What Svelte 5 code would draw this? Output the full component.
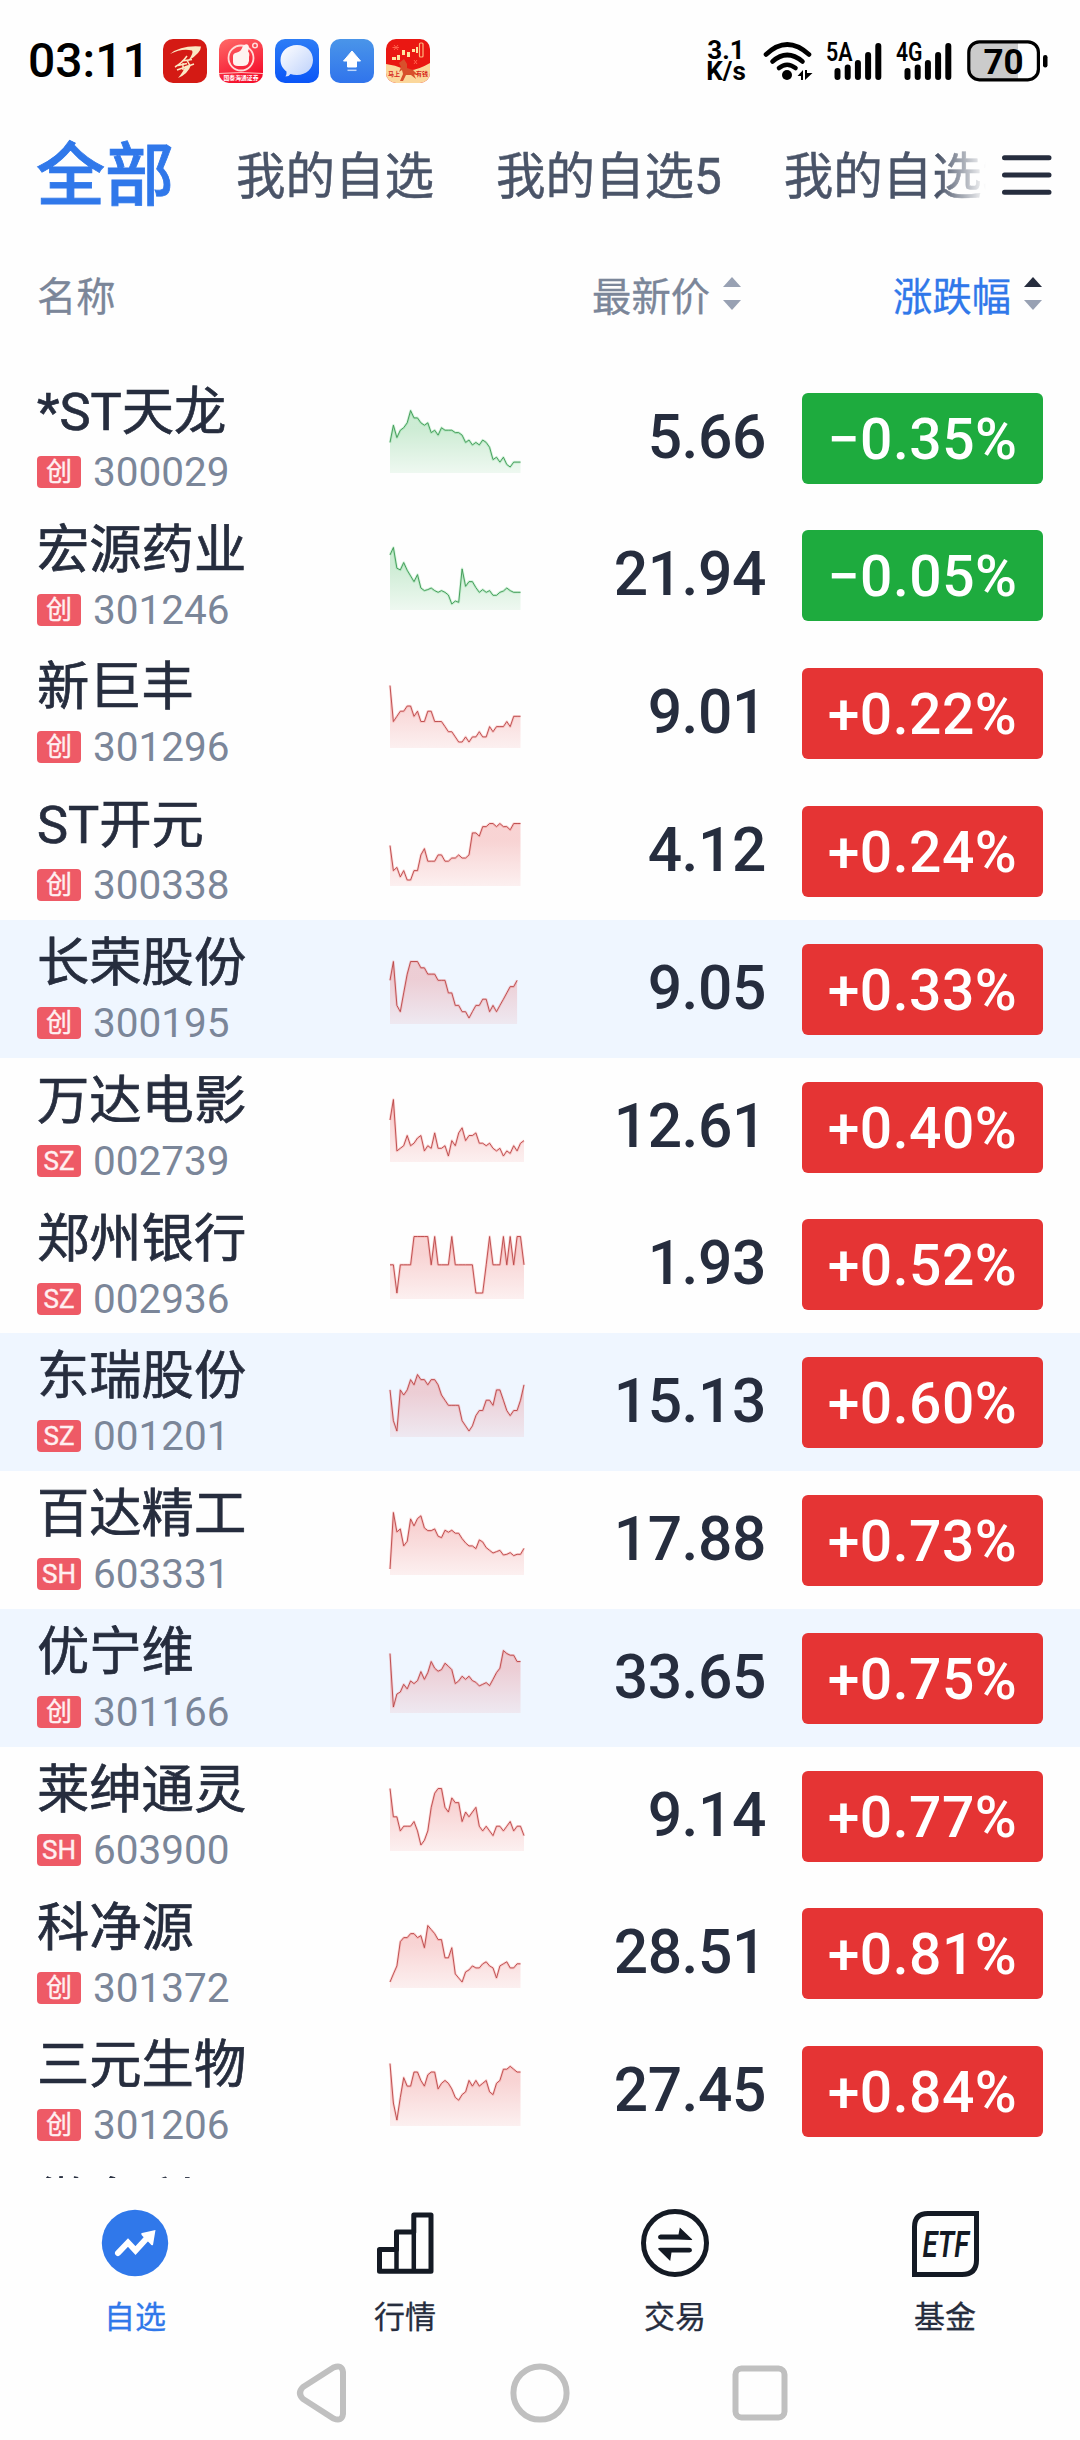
<script lang="ts">
	interface Stock {
		name: string;
		market: string;
		code: string;
		price: string;
		change: number;
		/** Row background is tinted */
		marked?: boolean;
		/** Intraday trend, relative levels */
		trend: number[];
	}

	const POINT_STEP = 3.435;
	const CHART_HEIGHT = 64;
	const CHART_TOP = 1.5;
	const CHART_BOTTOM = 6;

	const tabs = ['全部', '我的自选', '我的自选5', '我的自选3'];
	let activeTab = $state(0);
	let activeNav = $state('watch');

	const navItems = [
		{ id: 'watch', label: '自选' },
		{ id: 'market', label: '行情' },
		{ id: 'trade', label: '交易' },
		{ id: 'fund', label: '基金' }
	];

	const signals = ['5A', '4G'];

	const stocks: Stock[] = [
		{
			name: '*ST天龙', market: '创', code: '300029', price: '5.66', change: -0.35,
			trend: [10, 17, 12, 15, 16, 18, 23, 20, 20, 18, 17, 18, 14, 15, 13, 16, 15, 15, 15, 14, 14, 13, 10, 11, 9, 10, 9, 11, 10, 8, 3, 4, 2, 4, 1, 0, 2, 2, 2]
		},
		{
			name: '宏源药业', market: '创', code: '301246', price: '21.94', change: -0.05,
			trend: [147, 169, 107, 102, 124, 101, 84, 67, 88, 48, 40, 43, 48, 40, 35, 40, 35, 27, 0, 9, 5, 105, 53, 67, 67, 49, 35, 43, 35, 40, 26, 26, 35, 39, 48, 40, 35, 35, 35]
		},
		{
			name: '新巨丰', market: '创', code: '301296', price: '9.01', change: 0.22,
			trend: [11, 4, 5, 6, 6, 7, 7, 5, 6, 4, 4, 6, 6, 4, 4, 4, 3, 2, 2, 1, 0, 0, 1, 0, 1, 1, 2, 1, 1, 3, 2, 3, 3, 3, 4, 3, 5, 5, 5]
		},
		{
			name: 'ST开元', market: '创', code: '300338', price: '4.12', change: 0.24,
			trend: [11, 3, 4, 1, 3, 0, 0, 3, 3, 8, 10, 6, 6, 6, 8, 8, 6, 6, 7, 7, 8, 7, 7, 8, 15, 15, 14, 17, 17, 18, 18, 17, 18, 17, 17, 16, 18, 18, 18]
		},
		{
			name: '长荣股份', market: '创', code: '300195', price: '9.05', change: 0.33, marked: true,
			trend: [6, 9, 2, 1, 4, 7, 9, 9, 9, 8, 8, 7, 7, 7, 6, 6, 6, 4, 4, 2, 2, 1, 1, 0, 1, 2, 2, 3, 3, 1, 2, 1, 2, 3, 4, 5, 5, 6]
		},
		{
			name: '万达电影', market: 'SZ', code: '002739', price: '12.61', change: 0.4,
			trend: [14, 22, 2, 3, 4, 8, 4, 5, 7, 8, 2, 4, 3, 9, 3, 3, 4, 0, 6, 4, 9, 11, 6, 8, 8, 9, 5, 5, 4, 5, 3, 2, 3, 0, 2, 1, 4, 2, 5, 6]
		},
		{
			name: '郑州银行', market: 'SZ', code: '002936', price: '1.93', change: 0.52,
			trend: [1, 1, 0, 1, 1, 1, 1, 2, 2, 2, 2, 2, 1, 2, 1, 1, 1, 1, 2, 1, 1, 1, 1, 1, 1, 0, 0, 0, 1, 2, 1, 1, 1, 2, 1, 2, 1, 2, 2, 1]
		},
		{
			name: '东瑞股份', market: 'SZ', code: '001201', price: '15.13', change: 0.6, marked: true,
			trend: [8, 2, 0, 8, 7, 8, 10, 9, 11, 10, 10, 9, 10, 10, 9, 7, 6, 5, 5, 5, 5, 2, 1, 0, 1, 3, 4, 4, 6, 6, 5, 8, 8, 6, 4, 3, 4, 4, 6, 9]
		},
		{
			name: '百达精工', market: 'SH', code: '603331', price: '17.88', change: 0.73,
			trend: [0, 169, 111, 120, 69, 83, 150, 129, 151, 159, 123, 115, 115, 120, 98, 94, 116, 110, 116, 107, 107, 91, 78, 69, 69, 61, 87, 81, 64, 56, 48, 52, 56, 42, 44, 49, 40, 44, 44, 62]
		},
		{
			name: '优宁维', market: '创', code: '301166', price: '33.65', change: 0.75, marked: true,
			trend: [160, 0, 39, 45, 68, 54, 78, 70, 79, 106, 83, 103, 136, 116, 107, 112, 131, 122, 112, 70, 78, 92, 83, 92, 79, 74, 63, 68, 73, 64, 83, 103, 116, 169, 160, 155, 155, 136, 136]
		},
		{
			name: '莱绅通灵', market: 'SH', code: '603900', price: '9.14', change: 0.77,
			trend: [12, 6, 6, 3, 4, 4, 4, 5, 3, 0, 1, 3, 8, 11, 12, 12, 8, 7, 10, 9, 9, 5, 7, 6, 7, 8, 4, 3, 4, 3, 2, 4, 4, 3, 4, 5, 3, 4, 4, 2]
		},
		{
			name: '科净源', market: '创', code: '301372', price: '28.51', change: 0.81,
			trend: [0, 4, 8, 20, 22, 22, 24, 24, 22, 23, 17, 28, 26, 24, 21, 21, 12, 12, 17, 4, 2, 0, 5, 6, 8, 7, 7, 9, 10, 8, 7, 2, 8, 9, 10, 7, 7, 9, 9]
		},
		{
			name: '三元生物', market: '创', code: '301206', price: '27.45', change: 0.84,
			trend: [20, 6, 0, 8, 15, 12, 12, 17, 17, 14, 12, 16, 17, 17, 11, 13, 14, 13, 11, 8, 7, 9, 10, 14, 12, 14, 12, 13, 14, 10, 9, 13, 14, 18, 18, 19, 18, 17, 17]
		}
	];

	function linePoints(trend: number[]): string {
		const min = Math.min(...trend);
		const max = Math.max(...trend);
		const range = CHART_HEIGHT - CHART_TOP - CHART_BOTTOM;
		return trend
			.map((v, i) => {
				const y = CHART_TOP + ((max - v) / (max - min)) * range;
				return `${(i * POINT_STEP).toFixed(1)},${y.toFixed(1)}`;
			})
			.join(' ');
	}

	function areaPoints(trend: number[]): string {
		const right = ((trend.length - 1) * POINT_STEP).toFixed(1);
		return `0,${CHART_HEIGHT} ${linePoints(trend)} ${right},${CHART_HEIGHT}`;
	}
</script>

<div class="screen">
	<header class="status-bar">
		<span class="clock">03:11</span>
		<div class="app-icons">
			<svg width="44" height="44" viewBox="0 0 44 44">
				<rect width="44" height="44" rx="10" fill="#d41a14" />
				<path d="M7 15Q18 6 38 7.500Q38 14 25 22Q31 14 29 11.500Q19 9 7 15Z" fill="#fbe9c4" />
				<path d="M24 17Q19 24 12 28M19 22L29 20.500M15 26.500L24 24.500M20 24V31M24 21L27 27M14 31L31 25" fill="none" stroke="#fbe9c4" stroke-width="1.500" />
				<path d="M28 26Q25 35 15 39Q21 32 22 27Z" fill="#fbe9c4" />
			</svg>
			<svg width="44" height="44" viewBox="0 0 44 44">
				<defs>
					<linearGradient id="thumb-bg" x1="0" y1="0" x2="0.4" y2="1">
						<stop offset="0" stop-color="#ff6b68" />
						<stop offset="1" stop-color="#f5102d" />
					</linearGradient>
				</defs>
				<rect width="44" height="44" rx="10" fill="url(#thumb-bg)" />
				<circle cx="22" cy="19" r="12.500" fill="none" stroke="#ffdcd8" stroke-width="1.800" />
				<path d="M14 17Q14 14 18 13.500Q22 12.500 23.500 8Q25 4.500 28.500 5.500Q31 7 29 12.500Q31 14 30 18Q31 27 24 27H19Q14 27 14 23Z" fill="#fff3ef" />
				<circle cx="36" cy="6.500" r="2.300" fill="none" stroke="#ffdcd8" stroke-width="1.500" />
				<path d="M0 34.500Q22 32.500 44 34.500" stroke="#ffc4c0" fill="none" />
				<text x="4.500" y="40.800" font-size="5.800" font-weight="700" textLength="35" lengthAdjust="spacingAndGlyphs" fill="#fff">国泰海通证券</text>
			</svg>
			<svg width="44" height="44" viewBox="0 0 44 44">
				<defs>
					<linearGradient id="msg-bg" x1="0" y1="0" x2="0" y2="1">
						<stop offset="0" stop-color="#2d7df6" />
						<stop offset="1" stop-color="#0a55f7" />
					</linearGradient>
					<linearGradient id="msg-bubble" x1="0" y1="0" x2="1" y2="1">
						<stop offset="0" stop-color="#fff" />
						<stop offset="1" stop-color="#bcd0fb" />
					</linearGradient>
				</defs>
				<rect width="44" height="44" rx="10" fill="url(#msg-bg)" />
				<path d="M22 6C31.500 6 38 12.500 38 21S31.500 36 22 36Q18 36 15.500 35Q14 37.500 10.500 37.500Q12 35.500 11.500 32.500C8 30 5.500 26 5.500 21C5.500 12.500 12.500 6 22 6Z" fill="url(#msg-bubble)" />
			</svg>
			<svg width="44" height="44" viewBox="0 0 44 44">
				<defs>
					<linearGradient id="up-bg" x1="0" y1="0" x2="0" y2="1">
						<stop offset="0" stop-color="#4a95e9" />
						<stop offset="1" stop-color="#3074ec" />
					</linearGradient>
				</defs>
				<rect width="44" height="44" rx="10" fill="url(#up-bg)" />
				<path d="M22 12L30.500 22H26.500V28H17.500V22H13.500Z" fill="#fff" stroke="#fff" stroke-linejoin="round" />
				<path d="M17.500 31.300H26.500" stroke="#bcd5fb" stroke-width="1.500" />
			</svg>
			<svg width="44" height="44" viewBox="0 0 44 44">
				<defs>
					<clipPath id="horse-clip"><rect width="44" height="44" rx="10" /></clipPath>
				</defs>
				<g clip-path="url(#horse-clip)">
					<rect width="44" height="44" fill="#ea1712" />
					<path d="M0 25Q9 26 18 30T44 24V44H0Z" fill="#fbd79b" />
					<path d="M8 6L12 11M12 6L8 11M6.500 8.500H13M28 21L31 25M31 21L28 25" stroke="#ff604b" />
					<path d="M6 18H10V21H6ZM11 16H14V21H11ZM16 11H19V16H16ZM21 13H24V18H21ZM26 10H29V13H26ZM30 8H32V14H30Z" fill="#ffe3a0" />
					<rect x="33.500" y="4" width="3.500" height="14" rx="1" fill="none" stroke="#ffb77e" stroke-width="1.200" />
					<path d="M13 24L18 20L21 25L21 29L27 31L32 36L28 35.500L30 40L25 36L20 36L17 42H14L17 35L16 31L13 33L15 28Z" fill="#d8502c" />
					<text x="2" y="37" font-size="6" font-weight="700" fill="#d6281d">马上</text>
					<text x="30" y="37" font-size="6" font-weight="700" fill="#d6281d">有钱</text>
				</g>
			</svg>
		</div>
		<div class="status-right">
			<div class="net-speed"><span>3.1</span><span>K/s</span></div>
			<svg class="wifi" width="50" height="40" viewBox="0 0 50 40">
				<g fill="none" stroke="#000" stroke-width="4.600" stroke-linecap="round">
					<path d="M3 13.500Q24 -6.500 46 13.500" />
					<path d="M9.500 20.500Q24 7.500 39.500 20.500" />
					<path d="M16 27Q24 20.500 32.500 27" />
				</g>
				<circle cx="24" cy="34" r="5" />
				<path d="M40 29V39H38V35H34.500ZM42 29V39L49.500 32H44V29Z" />
			</svg>
			{#each signals as label}
				<svg class="signal" width="56" height="40" viewBox="0 0 56 40">
					<text x="0" y="20" font-size="25" font-weight="600" textLength="26.500" lengthAdjust="spacingAndGlyphs">{label}</text>
					<path d="M11.500 30V36M21.700 26.500V36M31.900 22V36M42.100 14V36M52.300 5V36" stroke="#000" stroke-width="6" stroke-linecap="round" />
				</svg>
			{/each}
			<svg class="battery" width="82" height="42" viewBox="0 0 82 42">
				<path d="M12 2H51V40H12Q2 40 2 30V12Q2 2 12 2Z" fill="#cbcbcb" />
				<rect x="1.800" y="1.800" width="69.600" height="38" rx="10.500" fill="none" stroke="#000" stroke-width="3.200" />
				<rect x="76" y="15" width="4.500" height="12.500" rx="2.200" />
				<text x="36.500" y="33.500" text-anchor="middle" font-size="35" font-weight="700">70</text>
			</svg>
		</div>
	</header>

	<div class="tab-bar">
		<div class="tabs">
			{#each tabs as tab, i}
				<button class="tab" class:active={activeTab === i} onclick={() => (activeTab = i)}>{tab}</button>
			{/each}
		</div>
		<button class="menu" aria-label="菜单">
			<svg width="50" height="42" viewBox="0 0 50 42">
				<path d="M2.500 3.700H47M2.500 21H47M2.500 38.300H47" stroke="#262d3e" stroke-width="5" stroke-linecap="round" />
			</svg>
		</button>
	</div>

	<div class="columns">
		<span class="col-name">名称</span>
		<span class="col-price">
			最新价
			<svg width="18" height="33" viewBox="0 0 18 33" fill="#98a1b3">
				<path d="M0 10L9 0L18 10Z" />
				<path d="M0 23L9 33L18 23Z" />
			</svg>
		</span>
		<span class="col-change">
			涨跌幅
			<svg width="18" height="33" viewBox="0 0 18 33" fill="#98a1b3">
				<path d="M0 10L9 0L18 10Z" fill="#262d3e" />
				<path d="M0 23L9 33L18 23Z" />
			</svg>
		</span>
	</div>

	<main class="list">
		<svg class="defs" width="0" height="0">
			<defs>
				<linearGradient id="area-up" x1="0" y1="0" x2="0" y2="64" gradientUnits="userSpaceOnUse">
					<stop offset="0.3" stop-color="#e23434" stop-opacity="0.21" />
					<stop offset="1" stop-color="#e23434" stop-opacity="0.07" />
				</linearGradient>
				<linearGradient id="area-down" x1="0" y1="0" x2="0" y2="64" gradientUnits="userSpaceOnUse">
					<stop offset="0.3" stop-color="#1eab3e" stop-opacity="0.22" />
					<stop offset="1" stop-color="#1eab3e" stop-opacity="0.07" />
				</linearGradient>
			</defs>
		</svg>
		{#each stocks as stock (stock.code)}
			{@const down = stock.change < 0}
			<div class="row" class:marked={stock.marked} class:down>
				<div class="identity">
					<div class="name">{stock.name}</div>
					<div class="meta">
						<span class="badge">{stock.market}</span>
						<span class="code">{stock.code}</span>
					</div>
				</div>
				<svg class="chart" width="138" height={CHART_HEIGHT}>
					<polygon points={areaPoints(stock.trend)} fill={down ? 'url(#area-down)' : 'url(#area-up)'} />
					<polyline class="halo" points={linePoints(stock.trend)} />
					<polyline class="line" points={linePoints(stock.trend)} />
				</svg>
				<div class="price">{stock.price}</div>
				<div class="change">{down ? '−' : '+'}{Math.abs(stock.change).toFixed(2)}%</div>
			</div>
		{/each}
		<div class="row">
			<div class="identity">
				<div class="name">微名利</div>
			</div>
		</div>
	</main>

	<nav class="bottom-nav">
		{#each navItems as item}
			<button class="nav-item" class:active={activeNav === item.id} onclick={() => (activeNav = item.id)}>
				<svg width="68" height="68" viewBox="0 0 68 68">
					{#if item.id === 'watch'}
						<circle cx="34" cy="34" r="33.200" fill="#3078ea" />
						<path d="M17 44L27 33.500L34.500 41.500L46 29" fill="none" stroke="#fff" stroke-width="6" stroke-linecap="round" />
						<path d="M54.500 21L52 36Q50.500 37 49.500 35L41 26.500Q39.500 24.500 41 24Z" fill="#fff" />
					{:else if item.id === 'market'}
						<g fill="none" stroke="#141a24" stroke-width="5" stroke-linejoin="round">
							<path d="M8.500 40.500H25.500V23H42.800V6H60V62.300H8.500Z" />
							<path d="M25.500 40.500V62M42.800 23V62" stroke-width="4.500" />
						</g>
					{:else if item.id === 'trade'}
						<circle cx="34" cy="34" r="31.500" fill="none" stroke="#141a24" stroke-width="5" />
						<g fill="#141a24">
							<path d="M19.500 25.500H37.500L38.800 18.500L51.300 30.500Q51 31.200 49 31L37 30.500H19.500Q17 30 17 28T19.500 25.500Z" />
							<path d="M48.500 43.500H30.500L29.200 52L17 40Q17 39 19 38.800H48.500Q51 39.200 51 41.200T48.500 43.500Z" />
						</g>
					{:else}
						<path d="M17 4.500H65.500V51Q65.500 65.500 51 65.500H3.500V18Q3.500 4.500 17 4.500Z" fill="none" stroke="#141a24" stroke-width="5" />
						<text x="11.500" y="47.500" font-size="36" font-weight="600" font-style="italic" textLength="46.500" lengthAdjust="spacingAndGlyphs" fill="#141a24">ETF</text>
					{/if}
				</svg>
				<span class="nav-label">{item.label}</span>
			</button>
		{/each}
	</nav>

	<div class="system-nav">
		<svg width="54" height="62" viewBox="0 0 54 62">
			<path d="M38.500 5.500L8 25Q2 31 8 37L38.500 56.500Q47 60 48 52V10Q47 2 38.500 5.500Z" />
		</svg>
		<svg width="60" height="60" viewBox="0 0 60 60">
			<circle cx="30" cy="30" r="26.600" />
		</svg>
		<svg width="56" height="56" viewBox="0 0 56 56">
			<rect x="3.500" y="3.500" width="49" height="49" rx="6" />
		</svg>
	</div>
</div>

<style>
	:global(body) {
		background: #fefefe;
	}

	.screen {
		display: flex;
		flex-direction: column;
		width: 1080px;
		height: 2440px;
		overflow: hidden;
		background: #fefefe;
		color: #262d3e;
		font-family: Roboto, 'Noto Sans CJK SC', sans-serif;
	}

	button {
		padding: 0;
		border: none;
		background: none;
		font-family: inherit;
		color: inherit;
	}

	svg {
		display: block;
		flex-shrink: 0;
	}

	/* Status bar */
	.status-bar {
		display: flex;
		align-items: center;
		height: 122px;
		padding: 0 31px 0 28px;
		color: #000;
	}

	.clock {
		width: 135px;
		font-size: 48px;
		font-weight: 500;
		line-height: 56px;
		white-space: nowrap;
	}

	.app-icons {
		display: flex;
		gap: 11.8px;
	}

	.status-right {
		display: flex;
		align-items: center;
		margin-left: auto;
	}

	.net-speed {
		display: flex;
		flex-direction: column;
		align-items: center;
		width: 40px;
		margin-right: 17px;
		font-size: 26px;
		font-weight: 700;
		line-height: 21.5px;
	}

	.wifi {
		margin-right: 13px;
	}

	.signal {
		margin-right: 14px;
	}

	.battery {
		margin-left: 1px;
	}

	/* Watchlist tabs */
	.tab-bar {
		display: flex;
		align-items: center;
		height: 106px;
		padding: 0 28px 0 36px;
	}

	.tabs {
		display: flex;
		align-items: center;
		box-sizing: border-box;
		flex: 1;
		min-width: 0;
		height: 100%;
		padding-top: 4px;
		gap: 62px;
		margin-right: 14px;
		overflow: hidden;
		mask-image: linear-gradient(to right, #000 902px, transparent 950px);
	}

	.tab {
		flex-shrink: 0;
		font-size: 49.5px;
		line-height: 72px;
		color: #4a5468;
		white-space: nowrap;
		-webkit-text-stroke: 0.5px currentColor;
	}

	.tab.active {
		font-size: 69px;
		font-weight: 500;
		color: #3078ea;
		-webkit-text-stroke: 0.8px currentColor;
	}

	/* Column titles */
	.columns {
		display: flex;
		align-items: center;
		height: 131px;
		padding: 0 38px 9.8px 37px;
		font-size: 39.3px;
		color: #7b8699;
		-webkit-text-stroke: 0.3px currentColor;
	}

	.col-name {
		flex: 1;
	}

	.col-price,
	.col-change {
		display: flex;
		align-items: center;
		gap: 13px;
	}

	.col-change {
		justify-content: flex-end;
		width: 301px;
		color: #3078ea;
	}

	/* Stock rows */
	.list {
		flex: none;
		height: 1809.2px;
		overflow: hidden;
	}

	.defs {
		position: absolute;
	}

	.row {
		display: grid;
		grid-template-columns: 353px 138px 1fr 241px;
		align-items: center;
		box-sizing: border-box;
		height: 137.8px;
		padding: 0 37px;
	}

	.row.marked {
		background: #eff6ff;
	}

	.identity {
		align-self: start;
		padding-top: 8px;
	}

	.name {
		font-size: 52.3px;
		line-height: 70px;
		white-space: nowrap;
		-webkit-text-stroke: 0.7px currentColor;
	}

	.meta {
		display: flex;
		align-items: center;
		gap: 12px;
		height: 32px;
		margin-top: 9px;
	}

	.badge {
		width: 44px;
		height: 32px;
		border-radius: 4px;
		background: #ee5a66;
		color: #fff0f1;
		font-size: 26px;
		line-height: 32px;
		text-align: center;
		-webkit-text-stroke: 0.4px currentColor;
	}

	.code {
		font-size: 40.5px;
		line-height: 32px;
		color: #7b8699;
	}

	.chart {
		margin-top: 6px;
		overflow: visible;
	}

	.chart polyline {
		fill: none;
		stroke-linejoin: round;
	}

	.halo {
		stroke: #f04848;
		stroke-opacity: 0.2;
		stroke-width: 2.6;
	}

	.line {
		stroke: #b94444;
		stroke-width: 0.9;
	}

	.down .halo {
		stroke: #2fc257;
	}

	.down .line {
		stroke: #3a9650;
	}

	.price {
		padding-right: 36px;
		font-size: 60.5px;
		font-weight: 500;
		line-height: 70px;
		letter-spacing: -0.4px;
		text-align: right;
	}

	.change {
		height: 91px;
		margin-top: 1px;
		border-radius: 6px;
		background: #e53434;
		color: #fff;
		font-size: 57px;
		font-weight: 500;
		line-height: 94px;
		letter-spacing: 0.5px;
		text-align: center;
		white-space: nowrap;
	}

	.down .change {
		background: #1eab3e;
	}

	/* Bottom navigation */
	.bottom-nav {
		display: flex;
		height: 168px;
	}

	.nav-item {
		display: flex;
		flex: 1;
		flex-direction: column;
		align-items: center;
		padding-top: 31px;
	}

	.nav-label {
		margin-top: 20px;
		font-size: 31px;
		line-height: 42px;
		-webkit-text-stroke: 0.3px currentColor;
	}

	.nav-item.active .nav-label {
		color: #3078ea;
	}

	.system-nav {
		display: flex;
		align-items: center;
		justify-content: center;
		height: 94px;
		gap: 161.5px;
		padding-left: 2px;
	}

	.system-nav svg {
		fill: none;
		stroke: #c0c0c0;
		stroke-width: 6;
	}
</style>
